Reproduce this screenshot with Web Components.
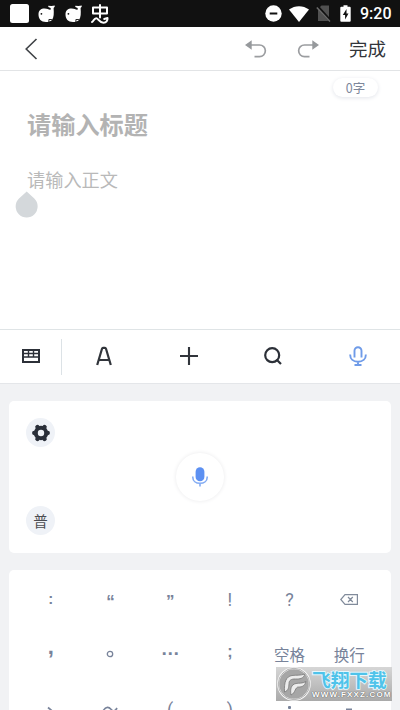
<!DOCTYPE html>
<html lang="zh-CN">
<head>
<meta charset="utf-8">
<title>编辑</title>
<style>
html,body{margin:0;padding:0;height:710px;overflow:hidden}
body{font-family:"Noto Sans CJK SC",sans-serif;background:#fff}
</style>
</head>
<body>
<note-app></note-app>
<script>
function define(name, html){
  customElements.define(name, class extends HTMLElement{
    constructor(){
      super();
      const t=document.createElement('template');
      t.innerHTML='<style>*{box-sizing:border-box}svg{display:block;overflow:visible}</style>'+html;
      this.attachShadow({mode:'open'}).appendChild(t.content.cloneNode(true));
    }
  });
}
const whale='<svg width="17" height="18" viewBox="0 0 17 18"><path fill="#fff" d="M.5 9.500C.5 5.500 3 3.600 6.500 3.600C9.500 3.600 10.500 4.800 12 4.800C12.800 4.800 12.900 4 12.600 3L10.300 2V.7l3.200.4L16.700.5v1.300L15.600 3C16 8 16 12.500 14 15C12.500 16.600 10 17 8 17C3 17 .5 14 .5 9.500z"/><circle cx="3.400" cy="8.800" r=".9" fill="#111"/><path d="M10.900 17v-2.500h3" stroke="#111" stroke-width=".9" fill="none"/></svg>';
define('status-bar',`<style>
:host{display:flex;height:27px;background:#111;color:#fff;align-items:center;padding:0 10px 0 10px}
.l{display:flex;align-items:center;gap:10px}
.r{display:flex;align-items:center;margin-left:auto;height:27px}
.time{font:500 16px/27px Roboto,sans-serif;margin-left:9px;width:30px;white-space:nowrap}
</style>
<div class="l">
<svg width="19" height="19"><rect width="19" height="19" rx="2.500" fill="#fff"/></svg>
<span style="margin-left:-1px">${whale}</span><span>${whale}</span>
<svg width="18" height="20" viewBox="0 0 18 20" fill="none" stroke="#fff" stroke-width="2" stroke-linecap="round" stroke-linejoin="round" style="margin-left:-1px"><path d="M2 3.500h14v6H2zM9 1v12.500M1 18c1.500-.3 2-3.800 4.200-3.800S8 18.700 12.500 18.700c2.800 0 4.200-1.800 4-4.700l-3.300 1"/></svg>
</div>
<div class="r">
<svg width="17" height="17" viewBox="0 0 17 17"><circle cx="8.500" cy="8.500" r="8.200" fill="#fff"/><path d="M4.700 8.500h7.600" stroke="#111" stroke-width="2"/></svg>
<svg style="margin-left:7px" width="20" height="16" viewBox="0 0 20 16"><path fill="#fff" d="M0 3.500C6-1 14-1 20 3.500L10 16z"/></svg>
<svg style="margin-left:7px" width="16" height="17" viewBox="0 0 16 17"><path fill="#505050" d="M5.500.5H13V16H2V4z"/><path d="M1 1l13.500 15" stroke="#111" stroke-width="3"/><path d="M.8 2.500L14 16.500" stroke="#6a6a6a" stroke-width="1.500"/></svg>
<svg style="margin-left:8px" width="11" height="17" viewBox="0 0 11 17"><path fill="#fff" d="M3.500.2h4v1.600h2.200q1 0 1 1v13q0 1-1 1H1.300q-1 0-1-1v-13q0-1 1-1h2.200z"/><path fill="#111" d="M6.500 4L2.800 10h2.300v4.500L8.500 8.400H6.500z"/></svg>
<span class="time">9:20</span></div>`);
define('title-bar',`<style>
:host{display:flex;height:44px;align-items:center;border-bottom:1px solid #e2e4e6;padding:0 13px 0 25px;background:#fff}
.done{font-size:18.500px;line-height:43px;color:#32353a;margin-left:30px;width:38px;white-space:nowrap}
.u{margin-left:auto}
</style>
<svg width="13" height="22" viewBox="0 0 13 22" fill="none" stroke="#3f4246" stroke-width="1.600"><path d="M11.500 1L1.200 11l10.300 10"/></svg>
<svg class="u" width="21" height="18" viewBox="0 0 21 18"><path d="M5 5h9.500a5.700 5.700 0 0 1 0 11.700H9.500" fill="none" stroke="#9b9da0" stroke-width="1.700"/><path d="M0 5L6.700.2v9.600z" fill="#96999c"/></svg>
<svg style="margin-left:32px" width="21" height="18" viewBox="0 0 21 18"><path d="M16 5H6.500a5.700 5.700 0 0 0 0 11.700H11.500" fill="none" stroke="#9b9da0" stroke-width="1.700"/><path d="M21 5L14.300.2v9.600z" fill="#96999c"/></svg>
<span class="done">完成</span>`);
define('note-editor',`<style>
:host{display:flex;flex-direction:column;height:258px;padding-top:7px;background:#fff}
.count{align-self:flex-end;margin-right:22px;width:45px;height:19px;border-radius:10px;box-shadow:0 1px 4px #e2e4ea;color:#7d879b;font-size:12.500px;line-height:19px;text-align:center;background:#fff}
.title{margin:9px 0 0 27px;font-size:24.200px;font-weight:700;line-height:36px;color:#b3b3b3;height:36px}
.body{margin:23px 0 0 27px;font-size:18.200px;font-weight:400;line-height:28px;height:28px;color:#b9b9b9}
.h{margin:-2px 0 0 15px}
</style>
<div class="count">0字</div><div class="title">请输入标题</div><div class="body">请输入正文</div>
<svg class="h" width="23" height="27" viewBox="0 0 23 27"><path fill="#d4d8db" d="M11.700.5l7.600 7A11 11 0 1 1 4 7.500z"/></svg>`);
define('tool-item',`<style>:host{flex:1;display:flex;align-items:center;justify-content:center;padding-bottom:1px}</style><slot></slot>`);
define('tool-bar',`<style>
:host{display:flex;height:55px;border-top:1px solid #dfe4e6;border-bottom:1px solid #e4e6e9;background:#fff;align-items:center}
.k{width:62px;height:36px;border-right:1px solid #dce2e6;display:flex;align-items:center;justify-content:center;padding-bottom:1px}
</style>
<div class="k"><svg width="18" height="14" viewBox="0 0 18 14" fill="none" stroke="#2c3038"><rect x="1" y="1" width="16" height="12" stroke-width="2"/><path d="M1 4.500h16M1 8h16M6.500 1v7M11.500 1v7" stroke-width="1.400"/></svg></div>
<tool-item><svg width="16" height="20" viewBox="0 0 16 20" fill="none" stroke="#31353b" stroke-width="2.200"><path d="M1.200 19L6 2.800Q6.300 1.900 7 1.900h2q.7 0 1 .9L14.800 19M3.300 14h9.400"/></svg></tool-item>
<tool-item><svg width="18" height="18" viewBox="0 0 18 18" stroke="#31353b" stroke-width="2.100"><path d="M9 0v18M0 9h18"/></svg></tool-item>
<tool-item><svg width="18" height="18" viewBox="0 0 18 18" fill="none" stroke="#2c3038" stroke-width="2.200"><circle cx="8.200" cy="8.200" r="7"/><path d="M12.500 12.500L17 17"/></svg></tool-item>
<tool-item><svg width="18" height="20" viewBox="0 0 18 20" fill="none" stroke="#6f9be8" stroke-width="1.900"><path d="M5.500 11.500V4.700a3.500 3.500 0 0 1 7 0v6.800M1.200 8.500v.5c0 4 3 6.700 7.800 6.700s7.800-2.700 7.800-6.700v-.5M9 16v3M5.500 19h7" /></svg></tool-item>`);
define('round-badge',`<style>:host{display:flex;align-items:center;justify-content:center;width:29px;height:29px;border-radius:50%;background:#eff2f7;color:#4b4d52;font-size:14.500px;line-height:28px}</style><slot></slot>`);
define('voice-panel',`<style>
:host{display:grid;grid-template-columns:48px 1fr 48px;height:152px;margin:0 9px;padding:17px 0 18px 17px;border-radius:5px;background:#fff}
.s{display:flex;flex-direction:column;justify-content:space-between}
.m{justify-self:center;align-self:center;margin-right:17px;width:48px;height:48px;border-radius:50%;box-shadow:0 0 4px #e9e9eb;display:flex;align-items:center;justify-content:center}
</style>
<div class="s"><round-badge><svg width="18" height="18" viewBox="-9 -9 18 18"><g fill="none" stroke="#2a2f39"><circle r="5.200" stroke-width="4"/><g stroke-width="4.300" stroke-linecap="round"><path d="M6.300 0h.5M-6.300 0h-.5M3.400 5.700l.2.300M-3.400 5.700l-.2.300M3.400-5.700l.2-.3M-3.400-5.700l-.2-.3"/></g></g></svg></round-badge>
<round-badge>普</round-badge></div>
<div class="m"><svg width="16" height="20" viewBox="0 0 16 20"><rect x="3.600" y=".3" width="8.800" height="14" rx="4.400" fill="#5c90f2"/><path d="M.8 9.500v.7c0 3.600 3 6.100 7.200 6.100s7.200-2.500 7.200-6.100v-.7M8 16v3.500" fill="none" stroke="#84acf3" stroke-width="1.600"/></svg></div>`);
define('key-cap',`<style>:host{display:flex;align-items:center;justify-content:center;height:55px;font-size:16px;line-height:24px;color:#78839a;white-space:nowrap}</style><slot></slot>`);
define('key-pad',`<style>
:host{display:grid;grid-template-columns:repeat(6,1fr);grid-auto-rows:55px;height:140px;margin:17px 9px 0;padding:2px 12px 0;border-radius:5px 5px 0 0;background:#fff;overflow:hidden}
.b{font-family:"Liberation Sans",sans-serif;font-weight:700}
.n{font-family:Roboto,sans-serif;font-size:18px}
.w{padding-bottom:2px;font-size:15.500px}
</style>
<key-cap><span class="b" style="font-size:15px;padding-bottom:2px">:</span></key-cap>
<key-cap><span class="b" style="padding-top:5px;font-size:17px">“</span></key-cap>
<key-cap><span class="b" style="padding-top:5px;font-size:17px">”</span></key-cap>
<key-cap><span class="n">!</span></key-cap>
<key-cap><span class="n">?</span></key-cap>
<key-cap><svg width="18" height="11" viewBox="0 0 18 11" fill="none" stroke="#818b9b" stroke-width="1.200"><path d="M5 .6h12.400v9.800H5L.8 5.500zM8 3l4.800 5M12.800 3L8 8"/></svg></key-cap>
<key-cap><span class="b" style="padding-bottom:15px;font-size:22px">,</span></key-cap>
<key-cap><svg style="margin-bottom:2px" width="8" height="8"><circle cx="4" cy="4" r="2.700" fill="none" stroke="#78839a" stroke-width="1.300"/></svg></key-cap>
<key-cap><span class="b" style="padding-bottom:12px;font-size:19px">…</span></key-cap>
<key-cap><span class="b" style="font-size:16px;padding-bottom:5px">;</span></key-cap>
<key-cap><span class="w">空格</span></key-cap><key-cap><span class="w">换行</span></key-cap>
<key-cap><svg width="8" height="8" viewBox="0 0 8 8"><path d="M1 1.500l6 5" stroke="#78839a" stroke-width="1.700"/></svg></key-cap>
<key-cap><svg width="16" height="6" viewBox="0 0 16 6"><path d="M1 4C4-1 7 0 9 2.200s4 2.500 6-1.200" fill="none" stroke="#78839a" stroke-width="1.600"/></svg></key-cap>
<key-cap><span class="n">(</span></key-cap>
<key-cap><span class="n">)</span></key-cap>
<key-cap><svg width="3" height="16"><rect y="4" width="3" height="3" rx="1" fill="#78839a"/></svg></key-cap>
<key-cap><svg width="6" height="4"><path d="M0 1.300h6" stroke="#78839a" stroke-width="1.500"/></svg></key-cap>`);
define('site-mark',`<style>
:host{position:absolute;left:276px;top:667px;width:116px;height:34px;display:flex;align-items:center;background:linear-gradient(#d6d6d6,#aaa);padding-left:1px}
.w{display:flex;flex-direction:column;width:78px;height:34px;margin-left:1px;white-space:nowrap}
.c{height:23px;line-height:23px;font-size:18.700px;font-weight:700;color:#4fc3ea;-webkit-text-stroke:1.800px #e6f7fd;paint-order:stroke fill}
.e{height:11px;line-height:10px;font-family:"Liberation Sans",sans-serif;font-weight:700;font-size:8px;letter-spacing:1.150px;color:#fff;text-shadow:0 0 1px #555,0 0 1px #666}
</style>
<svg width="34" height="34" viewBox="0 0 34 34"><circle cx="17" cy="17" r="15.800" fill="#a6a6a6" stroke="#f7f7f7" stroke-width="2"/><circle cx="17" cy="17" r="15.700" fill="none" stroke="#858585" stroke-width=".6"/><path d="M7.500 25C7 15 9 9.500 15 8.500c4.500-.6 8 .2 13-1.500-1.500 4.500-5 5.200-9.500 5-4.500-.2-6.500 1.500-6.500 4.500-.2 4-.5 7-4.500 8.500zM14 28c-1-6 0-10.500 5-11.500 3.500-.7 6 .3 10-2-1.500 5-4.500 5.500-7.500 5.500-3.500 0-3 6-7.500 8z" fill="#ececec" stroke="#777" stroke-width=".8"/></svg>
<div class="w"><div class="c">飞翔下载</div><div class="e">WWW.FXXZ.COM</div></div>`);
define('note-app',`<style>
:host{display:flex;flex-direction:column;position:relative;width:400px;height:710px;background:#f1f2f4;overflow:hidden}
voice-panel{margin-top:17px}
</style>
<status-bar></status-bar><title-bar></title-bar><note-editor></note-editor><tool-bar></tool-bar><voice-panel></voice-panel><key-pad></key-pad><site-mark></site-mark>`);
</script>
</body>
</html>
